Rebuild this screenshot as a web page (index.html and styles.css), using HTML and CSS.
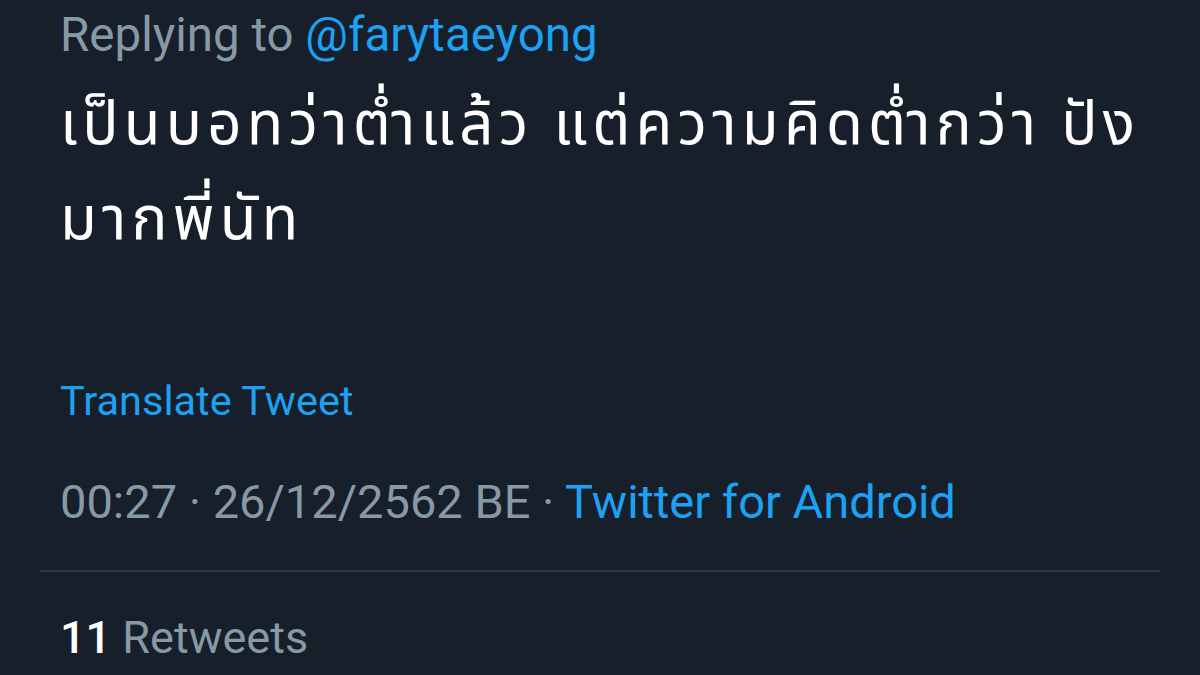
FILE: index.html
```html
<!DOCTYPE html>
<html lang="th">
<head>
<meta charset="utf-8">
<link rel="stylesheet" href="styles.css">
</head>
<body>
<main class="tweet">
  <div class="reply">Replying to <span class="link">@farytaeyong</span></div>
  <p class="body">เป็นบอทว่าต่ำแล้ว แต่ความคิดต่ำกว่า ปัง<br>มากพี่นัท</p>
  <div class="translate">Translate Tweet</div>
  <div class="meta">00:27 · 26/12/2562 BE · <span class="link">Twitter for Android</span></div>
  <div class="divider"></div>
  <div class="stats"><span class="num">11</span> Retweets</div>
</main>
</body>
</html>
```
FILE: styles.css
```css
html, body {
  margin: 0;
  padding: 0;
  background: #161f2a;
  width: 1200px;
  height: 675px;
  overflow: hidden;
}
.tweet {
  font-family: Roboto, "Noto Sans", "Noto Sans Thai", sans-serif;
  padding: 0 40px;
  display: flex;
  flex-direction: column;
}
.reply {
  color: #8899a6;
  font-size: 47.5px;
  line-height: 70px;
  padding-left: 20px;
}
.link { color: #1da1f2; }
.body {
  margin: 0;
  padding: 0 20px;
  color: #ffffff;
  font-size: 60px;
  letter-spacing: 5.2px;
  line-height: 95px;
  margin-top: 6px;
  white-space: nowrap;
}
.translate {
  color: #1da1f2;
  font-size: 41.5px;
  line-height: 50px;
  padding-left: 20px;
  margin-top: 110px;
}
.meta {
  color: #8899a6;
  font-size: 47px;
  line-height: 56px;
  padding-left: 20px;
  margin-top: 48px;
}
.divider {
  height: 2px;
  background: #2b3642;
  margin-top: 40px;
}
.stats {
  color: #8899a6;
  font-size: 45px;
  line-height: 56px;
  padding-left: 20px;
  margin-top: 38px;
}
.num { color: #ffffff; font-weight: 500; }
```
